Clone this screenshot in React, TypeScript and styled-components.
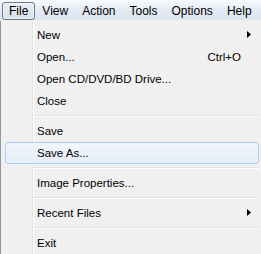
import React from "react";
import styled, { createGlobalStyle } from "styled-components";

const GlobalStyle = createGlobalStyle`
  html, body {
    margin: 0;
    padding: 0;
    background: #f0f0f0;
  }
  body {
    font-family: "Liberation Sans", Arial, sans-serif;
    font-size: 11.5px;
    color: #000;
  }
`;

type Entry =
  | { kind: "item"; label: string; shortcut?: string; sub?: boolean; hot?: boolean }
  | { kind: "sep" };

const entries: Entry[] = [
  { kind: "item", label: "New", sub: true },
  { kind: "item", label: "Open...", shortcut: "Ctrl+O" },
  { kind: "item", label: "Open CD/DVD/BD Drive..." },
  { kind: "item", label: "Close" },
  { kind: "sep" },
  { kind: "item", label: "Save" },
  { kind: "item", label: "Save As...", hot: true },
  { kind: "sep" },
  { kind: "item", label: "Image Properties..." },
  { kind: "sep" },
  { kind: "item", label: "Recent Files", sub: true },
  { kind: "sep" },
  { kind: "item", label: "Exit" },
];

const menus = ["File", "View", "Action", "Tools", "Options", "Help"];

const App = () => {
  return (
    <>
      <GlobalStyle />
      <Window>
        <MenuBar>
          {menus.map((m, i) => (
            <BarItem key={m} $open={i === 0}>
              {m}
            </BarItem>
          ))}
        </MenuBar>
        <Dropdown>
          {entries.map((e, i) =>
            e.kind === "sep" ? (
              <Separator key={i} />
            ) : (
              <Item key={i} $hot={e.hot}>
                <Label>{e.label}</Label>
                {e.shortcut && <Shortcut>{e.shortcut}</Shortcut>}
                {e.sub && (
                  <Arrow viewBox="0 0 4 7" width="4" height="7">
                    <path d="M0 0 L4 3.5 L0 7 Z" fill="#000" />
                  </Arrow>
                )}
              </Item>
            )
          )}
        </Dropdown>
      </Window>
    </>
  );
};

const Window = styled.div`
  width: 261px;
  height: 254px;
  display: flex;
  flex-direction: column;
  overflow: hidden;
`;

// menubar across the top, "File" is the open one
const MenuBar = styled.div`
  height: 21px;
  display: flex;
  align-items: flex-start;
  padding: 2px 0 0 2px;
  box-sizing: border-box;
  font-size: 12px;
  background: linear-gradient(#f7f9fd, #e4ebf5 50%, #dbe4f1);
  border-bottom: 1px solid #f0f0f0;
`;

const BarItem = styled.div<{ $open?: boolean }>`
  height: 18px;
  line-height: 16px;
  padding: 0 6px;
  box-sizing: border-box;
  white-space: nowrap;
  border: 1px solid ${(p) => (p.$open ? "#6c7784" : "transparent")};
  border-radius: 3px;
  background: ${(p) =>
    p.$open ? "linear-gradient(#e9eef5, #d6dfea)" : "transparent"};
  box-shadow: ${(p) => (p.$open ? "inset 0 0 0 1px rgba(255,255,255,0.6)" : "none")};
`;

const Dropdown = styled.div`
  flex: 1;
  background: #f0f0f0;
  border-left: 1px solid #979797;
  padding: 3px 2px 0 3px;
  display: flex;
  flex-direction: column;
  background-image: linear-gradient(
    to right,
    transparent 31px,
    #e2e3e3 31px,
    #e2e3e3 32px,
    #ffffff 32px,
    #ffffff 33px,
    transparent 33px
  );
`;

const Item = styled.div<{ $hot?: boolean }>`
  height: 22px;
  flex: none;
  display: flex;
  align-items: center;
  padding: 0 17px 0 31px;
  box-sizing: border-box;
  border: 1px solid ${(p) => (p.$hot ? "#a8d1f8" : "transparent")};
  border-radius: 3px;
  background: ${(p) =>
    p.$hot ? "linear-gradient(#f2f6fb, #e5edf8)" : "transparent"};
  position: relative;
  margin-left: 1px;
`;

const Label = styled.span`
  flex: 1;
  white-space: nowrap;
`;

const Shortcut = styled.span`
  white-space: nowrap;
`;

const Arrow = styled.svg`
  position: absolute;
  right: 7px;
  top: 6px;
`;

const Separator = styled.div`
  height: 8px;
  flex: none;
  margin-left: 30px;
  display: flex;
  flex-direction: column;
  justify-content: center;
  &::before {
    content: "";
    height: 1px;
    background: #e0e0e0;
  }
  &::after {
    content: "";
    height: 1px;
    background: #ffffff;
  }
`;

export default App;
